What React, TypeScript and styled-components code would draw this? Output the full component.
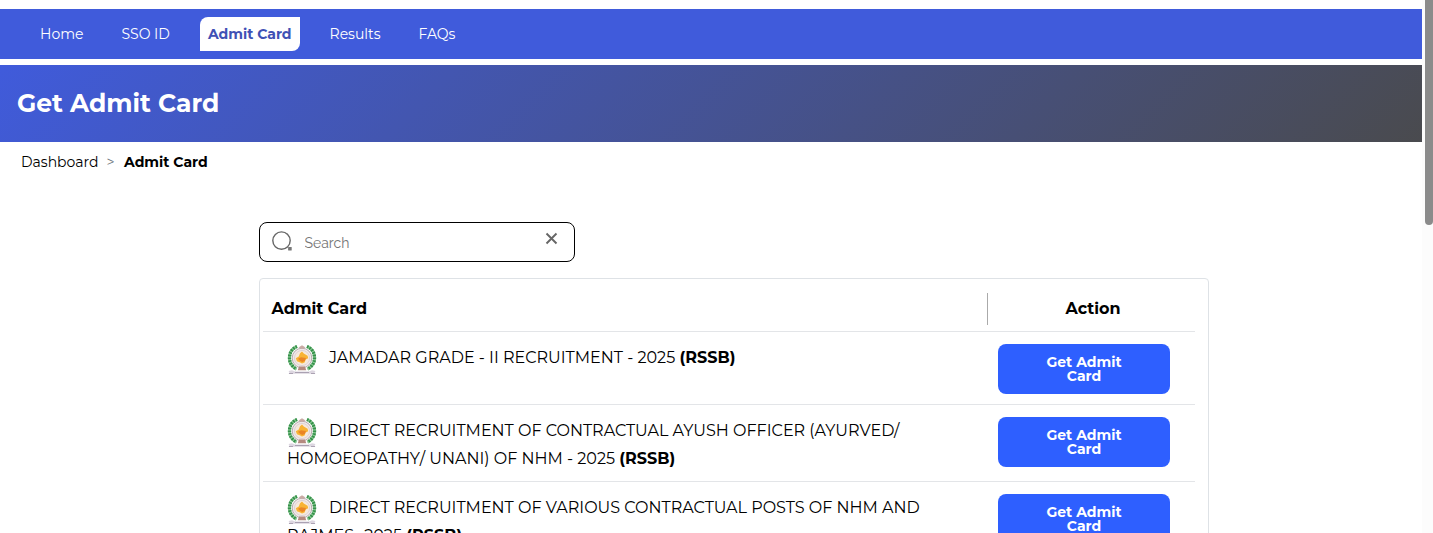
import React, { useState } from "react";
import styled, { createGlobalStyle } from "styled-components";

const GlobalStyle = createGlobalStyle`
  * {
    box-sizing: border-box;
  }

  html, body {
    margin: 0;
    height: 533px;
    overflow: hidden;
  }

  body {
    background: #fff;
    color: #000;
    font-family: Montserrat, Inter, "Open Sans", sans-serif;
  }
`;

const navItems = ["Home", "SSO ID", "Admit Card", "Results", "FAQs"];

const cards = [
  { title: "JAMADAR GRADE - II RECRUITMENT - 2025", board: "RSSB" },
  {
    title:
      "DIRECT RECRUITMENT OF CONTRACTUAL AYUSH OFFICER (AYURVED/ HOMOEOPATHY/ UNANI) OF NHM - 2025",
    board: "RSSB",
  },
  {
    title: "DIRECT RECRUITMENT OF VARIOUS CONTRACTUAL POSTS OF NHM AND RAJMES -2025",
    board: "RSSB",
  },
];

export default function App() {
  const [active, setActive] = useState("Admit Card");
  const [search, setSearch] = useState("");

  return (
    <Screen>
      <GlobalStyle />
      <Page>
        <Nav>
          {navItems.map((item) => (
            <NavLink key={item} $active={item === active} onClick={() => setActive(item)}>
              {item}
            </NavLink>
          ))}
        </Nav>
        <Banner>
          <Title>Get Admit Card</Title>
        </Banner>
        <Breadcrumb>
          <span>Dashboard</span>
          <Separator>&gt;</Separator>
          <CurrentCrumb>Admit Card</CurrentCrumb>
        </Breadcrumb>
        <Content>
          <SearchBox>
            <SearchIcon />
            <SearchInput
              placeholder="Search"
              value={search}
              onChange={(e) => setSearch(e.target.value)}
            />
            <ClearButton onClick={() => setSearch("")} aria-label="Clear">
              <svg width="13" height="13" viewBox="0 0 13 13">
                <path d="M1.5 1.5 11.5 11.5M11.5 1.5 1.5 11.5" stroke="#666" strokeWidth="1.9" />
              </svg>
            </ClearButton>
          </SearchBox>
          <Table>
            <HeadRow>
              <HeadName>Admit Card</HeadName>
              <HeadAction>Action</HeadAction>
            </HeadRow>
            {cards.map((card) => (
              <Row key={card.title}>
                <Name>
                  <Crest />
                  {card.title} <strong>({card.board})</strong>
                </Name>
                <Action>
                  <GetButton>Get Admit Card</GetButton>
                </Action>
              </Row>
            ))}
          </Table>
        </Content>
      </Page>
      <ScrollTrack>
        <ScrollThumb />
      </ScrollTrack>
    </Screen>
  );
}

function SearchIcon() {
  return (
    <svg width="22" height="22" viewBox="0 0 22 22" fill="none">
      <circle cx="10.5" cy="9.6" r="8.7" stroke="#666" strokeWidth="1.4" />
      <rect x="17.1" y="16" width="3.6" height="3.6" rx="0.6" fill="#777" />
    </svg>
  );
}

// State emblem: laurel wreath, round medallion, motto ribbon
function Crest() {
  return (
    <CrestSvg viewBox="0 0 30 31">
      <path d="M10 2.4A12.4 12.4 0 0 0 9.5 25M20 2.4A12.4 12.4 0 0 1 20.5 25" fill="none" stroke="#8cc795" strokeWidth="3.2" />
      <path d="M10 2.4A12.4 12.4 0 0 0 9.5 25M20 2.4A12.4 12.4 0 0 1 20.5 25" fill="none" stroke="#35924a" strokeWidth="3.3" strokeDasharray="1.7 1.1" />
      <circle cx="15" cy="14" r="9.8" fill="#f0e9ea" stroke="#b9abad" strokeWidth="1" />
      <circle cx="15" cy="14" r="7.6" fill="#f6e9dc" stroke="#d9cccf" strokeWidth="0.8" />
      <path d="M11.5 3.6 15 1.2l3.5 2.4L15 5z" fill="#c9aaa4" />
      <path d="M8.8 14.2l3-1.6 1.2-3.4L15 7.4l1.8 2.2 3.8 2.2.6 2.4-2.6 1.4-1 3-2.6.8-2.4-1.2-2.6-1z" fill="#f8b334" />
      <path d="M11 14.8l3-1.6 5 .8-1.2 3-2.6 1-2.2-1.2z" fill="#ea8526" />
      <path d="M12 22.6h6l1.2 3.6h-8.4z" fill="#b48a80" />
      <path d="M1.5 27l3.5-.8 3 1.2h14l3-1.2 3.5.8-1 1.4 1 1.4h-27l1-1.4z" fill="#dcd6e0" />
      <path d="M2 29.5h4m2-1h14m2 1h4" stroke="#9d93a6" strokeWidth="0.8" />
    </CrestSvg>
  );
}

const Screen = styled.div`
  display: grid;
  grid-template-columns: 1422px 11px;
  height: 533px;
  overflow: hidden;
`;

const Page = styled.div`
  min-width: 0;
  padding-top: 9px;
`;

const Nav = styled.nav`
  display: flex;
  align-items: center;
  gap: 22px;
  height: 50px;
  padding-left: 32px;
  background: #405bdb;
`;

const NavLink = styled.a<{ $active: boolean }>`
  height: 34px;
  padding: 0 8px;
  border-radius: 8px 0 8px 0;
  background: ${(p) => (p.$active ? "#fff" : "transparent")};
  color: ${(p) => (p.$active ? "#3f51b5" : "#fff")};
  font-size: 14px;
  font-weight: ${(p) => (p.$active ? 700 : 400)};
  line-height: 34px;
  white-space: nowrap;
  cursor: pointer;
`;

const Banner = styled.header`
  display: flex;
  align-items: center;
  height: 77px;
  margin-top: 6px;
  padding: 0 0 1px 17px;
  background: linear-gradient(135deg, #405bdb, #4a4a4a 103%);
`;

const Title = styled.h1`
  margin: 0;
  color: #fff;
  font-size: 25px;
  font-weight: 700;
`;

const Breadcrumb = styled.div`
  display: flex;
  align-items: center;
  height: 40px;
  padding-left: 21px;
  font-size: 14px;
`;

const Separator = styled.span`
  width: 25.5px;
  padding-left: 8px;
  color: #6c757d;
`;

const CurrentCrumb = styled.span`
  font-weight: 700;
`;

const Content = styled.main`
  width: 950px;
  margin: 40px 0 0 259px;
`;

const SearchBox = styled.div`
  display: flex;
  align-items: center;
  width: 316px;
  height: 40px;
  padding: 0 16px 0 11px;
  border: 1px solid #000;
  border-radius: 8px;
`;

const SearchInput = styled.input`
  flex: 1;
  min-width: 0;
  margin-left: 11.5px;
  padding: 2px 0 0;
  border: 0;
  outline: 0;
  font-family: Raleway, Lato, sans-serif;
  font-size: 14px;

  &::placeholder {
    color: #757575;
  }
`;

const ClearButton = styled.button`
  display: flex;
  padding: 0 0 7px;
  border: 0;
  background: none;
  cursor: pointer;
`;

const Table = styled.section`
  height: 600px;
  margin-top: 16px;
  padding: 14px 13px 0 3px;
  border: 1px solid #dee2e6;
  border-radius: 4px;
`;

const HeadRow = styled.div`
  display: grid;
  grid-template-columns: 725px 1fr;
  height: 39px;
  border-bottom: 1px solid #e3e5e8;
  font-size: 16px;
  font-weight: 700;
  line-height: 32px;
`;

const HeadName = styled.div`
  height: 32px;
  padding-left: 8.5px;
  border-right: 1px solid #aaa;
`;

const HeadAction = styled.div`
  padding-left: 3px;
  text-align: center;
`;

const Row = styled.div`
  display: grid;
  grid-template-columns: 725px 1fr;
  border-bottom: 1px solid #e3e5e8;
`;

const Name = styled.div`
  padding: 12px 10px 8px 24px;
  font-size: 16px;
  line-height: 28px;
`;

const CrestSvg = styled.svg`
  width: 30px;
  height: 31px;
  margin: -2px 12px -3px 0;
  vertical-align: middle;
`;

const Action = styled.div`
  padding: 12px 0 10px 10px;
`;

const GetButton = styled.button`
  display: block;
  width: 172px;
  height: 50px;
  padding: 0 40px;
  border: 0;
  border-radius: 8px;
  background: #2e5fff;
  color: #fff;
  font-family: inherit;
  font-size: 14px;
  font-weight: 700;
  line-height: 14px;
  cursor: pointer;
`;

const ScrollTrack = styled.div`
  padding-left: 3px;
  background: #fcfcfc;
`;

const ScrollThumb = styled.div`
  height: 225px;
  border-radius: 0 0 4px 4px;
  background: #8b8b8b;
`;
